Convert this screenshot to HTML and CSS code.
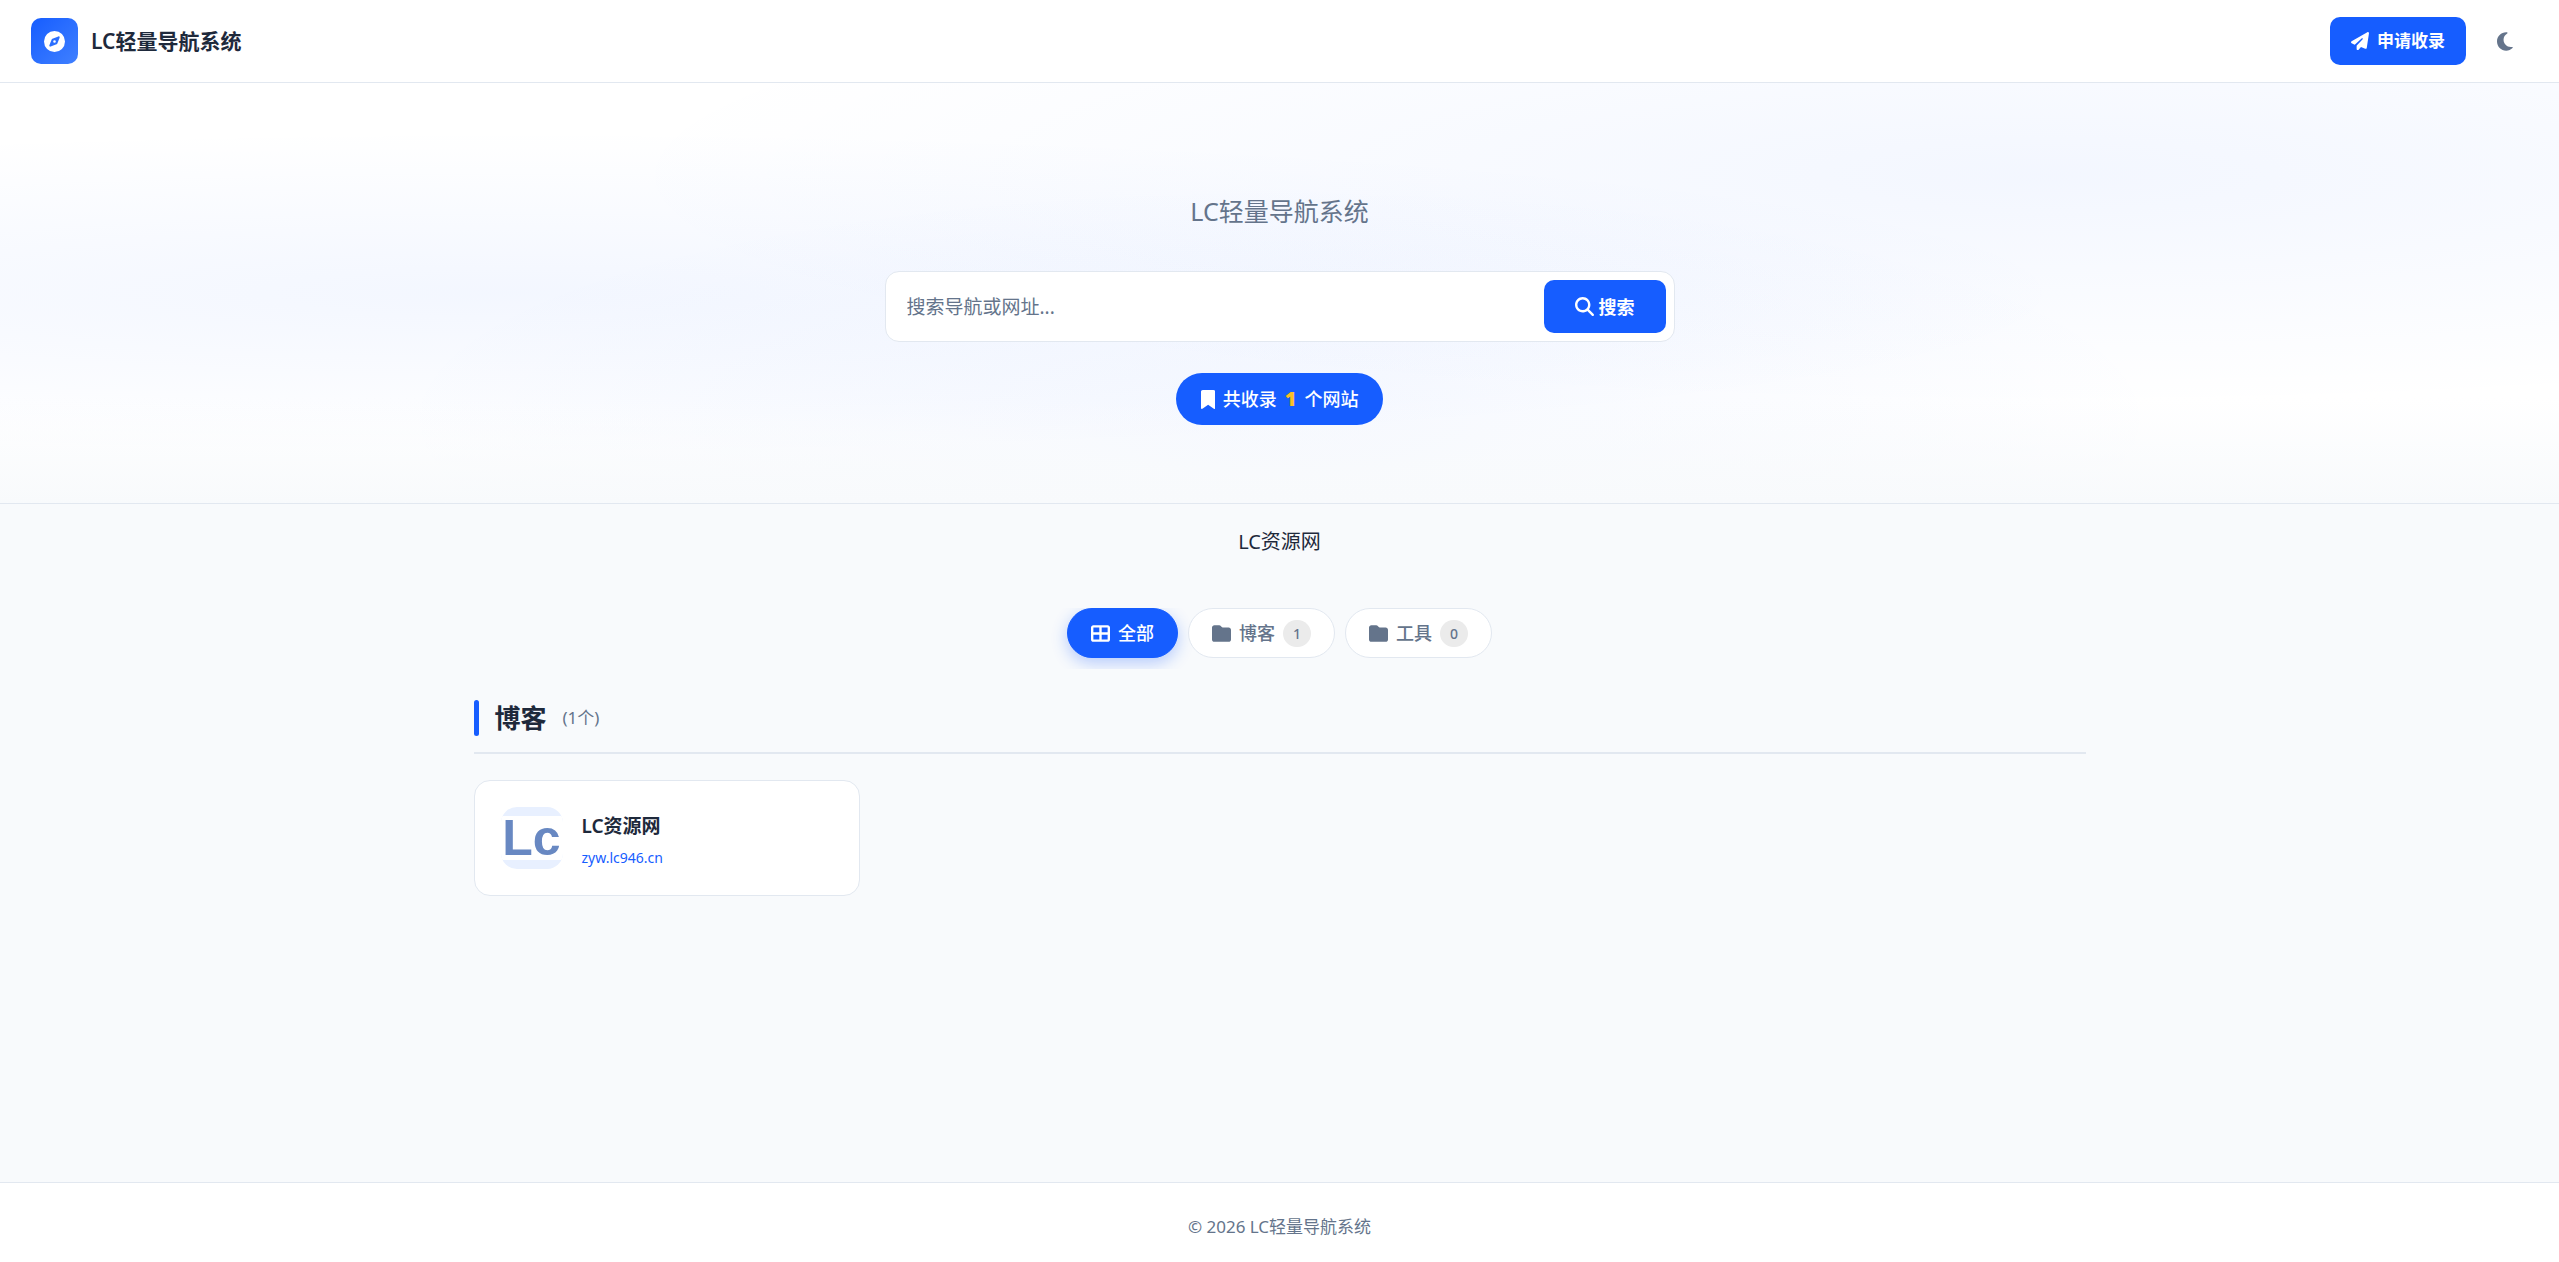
FILE: index.html
```html
<!DOCTYPE html>
<html lang="zh-CN">
  <head>
    <meta charset="UTF-8" />
    <meta name="viewport" content="width=device-width, initial-scale=1.0" />
    <title>LC轻量导航系统</title>
    <link rel="stylesheet" href="styles.css">
  </head>
  <body>
    <header class="header">
      <a href="#" class="brand">
        <span class="brand-icon">
          <svg class="icon" viewBox="0 0 512 512" aria-hidden="true"><path d="M256 512A256 256 0 1 0 256 0a256 256 0 1 0 0 512zm50.7-186.9L162.4 380.6c-19.4 7.5-38.5-11.6-31-31l55.5-144.3c3.3-8.5 9.9-15.1 18.4-18.4l144.3-55.5c19.4-7.5 38.5 11.6 31 31L325.1 306.7c-3.2 8.5-9.9 15.1-18.4 18.4zM288 256a32 32 0 1 0 -64 0 32 32 0 1 0 64 0z"/></svg>
        </span>
        <span class="brand-name">LC轻量导航系统</span>
      </a>
      <div class="header-actions">
        <a href="#" class="btn-apply">
          <svg class="icon" viewBox="0 0 512 512" aria-hidden="true"><path d="M498.1 5.6c10.1 7 15.4 19.1 13.5 31.2l-64 416c-1.5 9.7-7.4 18.2-16 23s-18.9 5.4-28 1.6L284 427.7l-68.5 74.1c-8.9 9.7-22.9 12.9-35.2 8.1S160 493.2 160 480V396.4c0-4 1.5-7.8 4.2-10.7L331.8 202.8c5.8-6.3 5.6-16-.4-22s-15.7-6.4-22-.7L106 360.8 17.7 316.6C7.1 311.3 .3 300.7 0 288.9s5.9-22.8 16.1-28.7l448-256c10.7-6.1 23.9-5.5 34 1.4z"/></svg>
          <span>申请收录</span>
        </a>
        <button type="button" class="theme-toggle" aria-label="切换主题">
          <svg class="icon" viewBox="0 0 384 512" aria-hidden="true"><path d="M223.5 32C100 32 0 132.3 0 256S100 480 223.5 480c60.6 0 115.5-24.2 155.8-63.4c5-4.9 6.3-12.5 3.1-18.7s-10.1-9.7-17-8.5c-9.8 1.7-19.8 2.6-30.1 2.6c-96.9 0-175.5-78.8-175.5-176c0-65.8 36-123.1 89.3-153.3c6.1-3.5 9.2-10.5 7.7-17.3s-7.3-11.9-14.3-12.5c-6.3-.5-12.6-.8-19-.8z"/></svg>
        </button>
      </div>
    </header>

    <section class="hero">
      <p class="hero-title">LC轻量导航系统</p>
      <form class="search">
        <input type="text" class="search-input" placeholder="搜索导航或网址..." aria-label="搜索导航或网址">
        <button type="submit" class="search-btn">
          <svg class="icon" viewBox="0 0 512 512" aria-hidden="true"><path d="M416 208c0 45.9-14.9 88.3-40 122.7L502.6 457.4c12.5 12.5 12.5 32.8 0 45.3s-32.8 12.5-45.3 0L330.7 376c-34.4 25.2-76.8 40-122.7 40C93.1 416 0 322.9 0 208S93.1 0 208 0S416 93.1 416 208zM208 352a144 144 0 1 0 0-288 144 144 0 1 0 0 288z"/></svg>
          <span>搜索</span>
        </button>
      </form>
      <div class="stats">
        <svg class="icon" viewBox="0 0 384 512" aria-hidden="true"><path d="M0 48V487.7C0 501.1 10.9 512 24.3 512c5 0 9.9-1.5 14-4.4L192 400 345.7 507.6c4.1 2.9 9 4.4 14 4.4c13.4 0 24.3-10.9 24.3-24.3V48c0-26.5-21.5-48-48-48H48C21.5 0 0 21.5 0 48z"/></svg>
        <span>共收录</span>
        <strong class="stats-number">1</strong>
        <span>个网站</span>
      </div>
    </section>

    <main class="main">
      <p class="notice">LC资源网</p>

      <nav class="tabs">
        <button type="button" class="tab active">
          <svg class="icon" viewBox="0 0 512 512" aria-hidden="true"><path d="M448 96V224H288V96H448zm0 192V416H288V288H448zM224 224H64V96H224V224zM64 288H224V416H64V288zM64 32C28.7 32 0 60.7 0 96V416c0 35.3 28.7 64 64 64H448c35.3 0 64-28.7 64-64V96c0-35.3-28.7-64-64-64H64z"/></svg>
          <span>全部</span>
        </button>
        <button type="button" class="tab">
          <svg class="icon" viewBox="0 0 512 512" aria-hidden="true"><path d="M64 480H448c35.3 0 64-28.7 64-64V160c0-35.3-28.7-64-64-64H288c-10.1 0-19.6-4.7-25.6-12.8L243.2 57.6C231.1 41.5 212.1 32 192 32H64C28.7 32 0 60.7 0 96V416c0 35.3 28.7 64 64 64z"/></svg>
          <span>博客</span>
          <span class="count">1</span>
        </button>
        <button type="button" class="tab">
          <svg class="icon" viewBox="0 0 512 512" aria-hidden="true"><path d="M64 480H448c35.3 0 64-28.7 64-64V160c0-35.3-28.7-64-64-64H288c-10.1 0-19.6-4.7-25.6-12.8L243.2 57.6C231.1 41.5 212.1 32 192 32H64C28.7 32 0 60.7 0 96V416c0 35.3 28.7 64 64 64z"/></svg>
          <span>工具</span>
          <span class="count">0</span>
        </button>
      </nav>

      <section class="category">
        <div class="category-header">
          <h2>博客</h2>
          <span class="category-count">(1个)</span>
        </div>
        <div class="grid">
          <a href="#" class="card">
            <span class="card-logo"><span class="card-logo-text">Lc</span></span>
            <span class="card-info">
              <span class="card-name">LC资源网</span>
              <span class="card-url">zyw.lc946.cn</span>
            </span>
          </a>
        </div>
      </section>
    </main>

    <footer class="footer">
      <p>© 2026 LC轻量导航系统</p>
    </footer>
  </body>
</html>
```
FILE: styles.css
```css
:root {
  --primary: #165dff;
  --text: #1e293b;
  --muted: #64748b;
  --border: #e2e8f0;
  --bg: #f8fafc;
}
* {
  box-sizing: border-box;
  margin: 0;
  padding: 0;
}
body {
  display: flex;
  flex-direction: column;
  min-height: 100vh;
  font-family: "Noto Sans", "Noto Sans CJK SC", sans-serif;
  font-size: 18px;
  line-height: 28px;
  color: var(--text);
  background-color: var(--bg);
}
a {
  color: inherit;
  text-decoration: none;
}
button,
input {
  font: inherit;
  border: none;
}
button {
  cursor: pointer;
}
.icon {
  height: 19px;
  fill: currentColor;
  flex-shrink: 0;
}

/************************
  HEADER
************************/
.header {
  display: flex;
  justify-content: space-between;
  align-items: center;
  padding: 17px 31px;
  background-color: #fff;
  border-bottom: 1px solid var(--border);
}
.brand {
  display: flex;
  align-items: center;
  gap: 13px;
}
.brand-icon {
  display: flex;
  align-items: center;
  justify-content: center;
  width: 47px;
  height: 46px;
  border-radius: 10px;
  color: #fff;
  background: linear-gradient(135deg, var(--primary), #4080ff);
}
.brand-icon .icon {
  height: 21px;
}
.brand-name {
  font-size: 21px;
  font-weight: 600;
}
.header-actions {
  display: flex;
  align-items: center;
  gap: 16px;
}
.btn-apply {
  display: flex;
  align-items: center;
  gap: 8px;
  height: 48px;
  padding: 0 21px;
  border-radius: 10px;
  font-size: 17px;
  font-weight: 700;
  color: #fff;
  background-color: var(--primary);
}
.btn-apply .icon {
  height: 18px;
}
.theme-toggle {
  display: flex;
  align-items: center;
  justify-content: center;
  width: 46px;
  height: 46px;
  color: var(--muted);
  background: none;
}
.theme-toggle .icon {
  height: 21px;
}

/************************
  HERO
************************/
.hero {
  display: flex;
  flex-direction: column;
  align-items: center;
  padding: 108px 32px 78px;
  border-bottom: 1px solid var(--border);
  background:
    linear-gradient(0deg, var(--bg), rgba(248, 250, 252, 0) 25%),
    radial-gradient(ellipse at 20% 50%, rgba(22, 93, 255, 0.05), transparent 55%),
    radial-gradient(ellipse at 80% 22%, rgba(22, 93, 255, 0.05), transparent 50%),
    radial-gradient(ellipse at 50% 80%, rgba(22, 93, 255, 0.04), transparent 50%),
    #fff;
}
.hero-title {
  font-size: 25px;
  line-height: 40px;
  color: var(--muted);
  margin-bottom: 40px;
}
.search {
  display: flex;
  width: 100%;
  max-width: 790px;
  padding: 8px;
  border: 1px solid var(--border);
  border-radius: 14px;
  background-color: #fff;
}
.search-input {
  flex: 1;
  min-width: 0;
  padding: 0 13px;
  font-size: 19px;
  color: var(--text);
  background: none;
  outline: none;
}
.search-input::placeholder {
  color: var(--muted);
}
.search-btn {
  display: flex;
  align-items: center;
  gap: 5px;
  height: 53px;
  padding: 0 31px;
  border-radius: 10px;
  font-weight: 700;
  color: #fff;
  background-color: var(--primary);
}
.stats {
  display: flex;
  align-items: center;
  gap: 8px;
  height: 52px;
  margin-top: 31px;
  padding: 0 25px;
  border-radius: 26px;
  font-weight: 500;
  color: #fff;
  background-color: var(--primary);
}
.stats-number {
  font-size: 20px;
  font-weight: 900;
  color: #fbbf24;
}

/************************
  MAIN
************************/
.main {
  flex: 1;
  width: 100%;
  max-width: 1676px;
  margin: 0 auto;
  padding: 0 32px;
}
.notice {
  padding: 24px 0;
  font-size: 20px;
  text-align: center;
}
.tabs {
  display: flex;
  justify-content: center;
  gap: 10px;
  margin-top: 28px;
  padding-bottom: 11px;
  overflow: hidden;
}
.tab {
  display: flex;
  align-items: center;
  gap: 8px;
  height: 50px;
  padding: 0 23px;
  border: 1px solid var(--border);
  border-radius: 25px;
  font-weight: 500;
  color: var(--muted);
  background-color: #fff;
}
.tab.active {
  color: #fff;
  border-color: var(--primary);
  background-color: var(--primary);
  box-shadow: 0 5px 16px rgba(22, 93, 255, 0.3);
}
.count {
  padding: 0 10px;
  border-radius: 14px;
  font-size: 14px;
  line-height: 27px;
  background-color: #ebebeb;
}
.category {
  margin-top: 31px;
}
.category-header {
  display: flex;
  align-items: center;
  gap: 16px;
  padding-bottom: 16px;
  margin-bottom: 26px;
  border-bottom: 2px solid var(--border);
}
.category-header::before {
  content: "";
  width: 5px;
  height: 36px;
  border-radius: 3px;
  background-color: var(--primary);
}
.category-header h2 {
  font-size: 26px;
  line-height: 36px;
}
.category-count {
  font-size: 17px;
  color: var(--muted);
}
.grid {
  display: grid;
  grid-template-columns: repeat(auto-fill, minmax(340px, 1fr));
  gap: 22px;
}
.card {
  display: flex;
  align-items: center;
  gap: 19px;
  padding: 26px;
  border: 1px solid var(--border);
  border-radius: 16px;
  background-color: #fff;
}
.card-logo {
  display: flex;
  flex-direction: column;
  justify-content: center;
  width: 62px;
  height: 62px;
  border-radius: 16px;
  overflow: hidden;
  background-color: #e8f0ff;
}
.card-logo-text {
  font-family: "Liberation Sans", sans-serif;
  font-size: 50px;
  font-weight: 700;
  line-height: 44px;
  text-align: center;
  color: #6888c2;
  background-color: #fff;
}
.card-info {
  display: flex;
  flex-direction: column;
  gap: 7px;
  padding-top: 5px;
}
.card-name {
  font-size: 19px;
  font-weight: 600;
}
.card-url {
  font-size: 14px;
  line-height: 22px;
  color: var(--primary);
}

/************************
  FOOTER
************************/
.footer {
  padding: 30px 32px 21px;
  border-top: 1px solid var(--border);
  font-size: 17px;
  text-align: center;
  color: var(--muted);
  background-color: #fff;
}
```
